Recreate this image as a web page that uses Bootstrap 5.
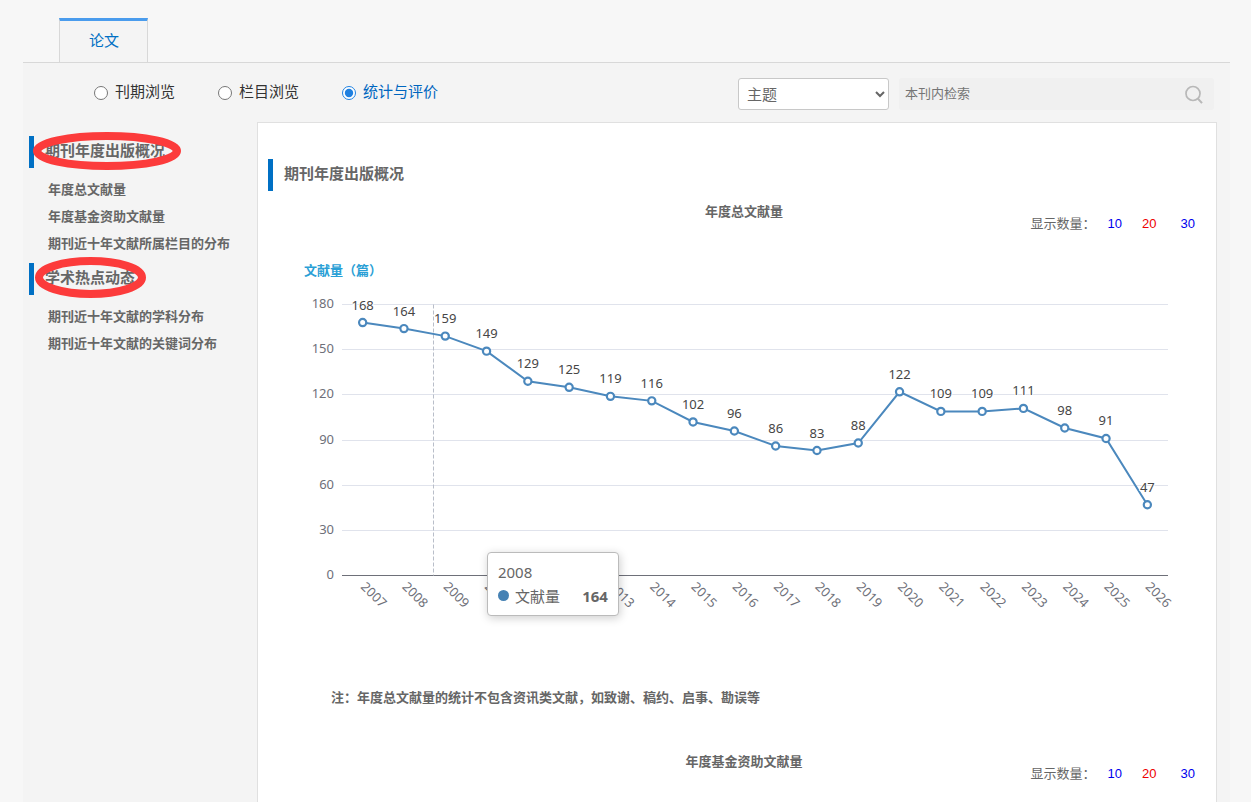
<!DOCTYPE html>
<html lang="zh-CN">
<head>
<meta charset="utf-8">
<meta name="viewport" content="width=device-width, initial-scale=1">
<title>期刊年度出版概况</title>
<link href="https://cdn.jsdelivr.net/npm/bootstrap@5.3.0/dist/css/bootstrap.min.css" rel="stylesheet">
<style>
  body { background: #f7f7f7; color: #666; font: 13px/20px "Liberation Sans", "Noto Sans CJK SC", sans-serif; }
  a { text-decoration: none; }
  .page-wrap { margin: 0 21px 0 23px; padding-top: 18px; }
  .tab-bar { padding-left: 36px; border-bottom: 1px solid #d8d8d8; }
  .tab-item { padding: 0 28px 1px 29px; border: 1px solid #d8d8d8; border-top: 3px solid #4a9ced; border-bottom: 0; background: #f4f4f4; color: #0070c4; font-size: 15px; line-height: 40px; }
  .page-body { background: #f4f4f4; }
  .tool-bar { padding: 15px 16px 12px 71px; color: #333; font-size: 15px; }
  .mode-list { gap: 43px; padding-bottom: 4px; }
  .mode-list label { gap: 7px; }
  .mode-list input { width: 14px; height: 14px; margin: 2px 0 0; accent-color: #1f80e0; }
  .mode-on { color: #0066bf; }
  .field-pick { width: 151px; height: 32px; margin-right: 10px; padding: 0 4px; border: 1px solid #c8c8c8; border-radius: 3px; background: #fff; color: #666; font-size: 15px; }
  .search-box { width: 315px; height: 32px; border-radius: 3px; background: #f0f0f0; padding: 0 10px 0 6px; }
  .search-box input { border: 0; background: none; outline: 0; font-size: 13px; min-width: 0; }
  .search-box input::placeholder { color: #757575; opacity: 1; }
  .search-box button { border: 0; background: none; padding: 0; line-height: 0; }
  .side-menu { width: 234px; padding: 14px 0 0 6px; }
  .side-menu ul { margin: 8px 0 6px; padding-left: 19px; line-height: 27px; font-weight: 700; }
  .side-menu li a { color: #666; }
  .bar-title { margin: 0; border-left: 5px solid #0070c4; padding-left: 11px; font-size: 15px; font-weight: 700; line-height: 30px; height: 32px; }
  .ring { left: 3px; top: -6px; overflow: visible; }
  .main-panel { margin-right: 13px; border: 1px solid #e0e0e0; border-bottom: 0; background: #fff; padding-top: 36px; min-width: 0; }
  .main-panel > .bar-title { margin-left: 10px; }
  .stat-head { display: grid; grid-template-columns: 1fr auto 1fr; align-items: start; padding: 11px 21px 0 35px; }
  .stat-head h3 { grid-column: 2; margin: 0; font-size: 13px; font-weight: 700; line-height: 20px; }
  .count-pick { padding-top: 12px; }
  .count-pick span { margin-right: 12px; }
  .count-pick nav { gap: 20px; }
  .count-pick a { color: #00e; }
  .count-pick a.active { color: #e00; }
  .chart-box { margin-top: 16px; }
  .chart-box text { font: 13px "Noto Sans", "Noto Sans CJK SC", sans-serif; fill: #6e7079; }
  .chart-box .unit { font: 700 13px "Noto Sans CJK SC", sans-serif; fill: #2a9fd6; }
  .chart-box .value { fill: #464646; stroke: #fff; stroke-width: 2px; paint-order: stroke; text-anchor: middle; }
  .tip { left: 23.9%; top: 77.4%; width: 132px; padding: 9px 10px; border: 1px solid #bbb; border-radius: 4px; background: #fff; box-shadow: 1px 2px 10px rgba(0,0,0,.2); color: #666; font: 15px/20px "Noto Sans", "Noto Sans CJK SC", sans-serif; }
  .dot { width: 11px; height: 11px; border-radius: 50%; background: #4682b4; margin-right: 6px; }
  .stat-note { margin: 48px 0 33px 73px; font-weight: 700; }
</style>
</head>
<body>
<div class="page-wrap d-flex flex-column min-vh-100">
  <nav class="tab-bar d-flex"><a class="tab-item" href="#">论文</a></nav>
  <div class="page-body flex-grow-1 d-flex flex-column">
    <form class="tool-bar d-flex align-items-center">
      <div class="mode-list d-flex me-auto">
        <label class="d-flex align-items-center"><input type="radio" name="mode">刊期浏览</label>
        <label class="d-flex align-items-center"><input type="radio" name="mode">栏目浏览</label>
        <label class="d-flex align-items-center mode-on"><input type="radio" name="mode" checked>统计与评价</label>
      </div>
      <select class="field-pick" aria-label="检索字段"><option>主题</option><option>篇名</option><option>作者</option></select>
      <div class="search-box d-flex align-items-center">
        <input class="flex-grow-1 p-0" type="text" placeholder="本刊内检索" aria-label="本刊内检索">
        <button type="button" aria-label="检索"><svg width="20" height="20" viewBox="0 0 20 20" fill="none" stroke="#b8b8b8" stroke-width="1.7"><circle cx="9" cy="9.5" r="7"/><path d="M13.8 14.5l4.2 4.6" stroke-width="2"/></svg></button>
      </div>
    </form>
    <div class="d-flex flex-grow-1">
      <aside class="side-menu flex-shrink-0">
        <div class="position-relative">
          <h2 class="bar-title">期刊年度出版概况</h2>
          <svg class="ring position-absolute" width="150" height="42" fill="none" stroke="#fc3b3b" stroke-width="8"><ellipse cx="75" cy="21" rx="70" ry="15"/></svg>
        </div>
        <ul class="list-unstyled">
          <li><a href="#">年度总文献量</a></li>
          <li><a href="#">年度基金资助文献量</a></li>
          <li><a href="#">期刊近十年文献所属栏目的分布</a></li>
        </ul>
        <div class="position-relative">
          <h2 class="bar-title">学术热点动态</h2>
          <svg class="ring position-absolute" width="116" height="42" fill="none" stroke="#fc3b3b" stroke-width="8"><ellipse cx="58.5" cy="20.5" rx="51.5" ry="16.5"/></svg>
        </div>
        <ul class="list-unstyled">
          <li><a href="#">期刊近十年文献的学科分布</a></li>
          <li><a href="#">期刊近十年文献的关键词分布</a></li>
        </ul>
      </aside>
      <main class="main-panel flex-grow-1">
        <h2 class="bar-title">期刊年度出版概况</h2>
        <section>
          <div class="stat-head">
            <h3>年度总文献量</h3>
            <div class="count-pick d-flex justify-content-end"><span>显示数量：</span><nav class="d-flex"><a href="#">10</a><a class="active" href="#">20</a><a href="#" class="ms-1">30</a></nav></div>
          </div>
          <div class="chart-box position-relative">
            <svg id="chart" class="d-block w-100" viewBox="0 0 958 390" role="img" aria-label="年度总文献量"></svg>
            <div class="tip position-absolute">
              <div>2008</div>
              <div class="d-flex align-items-center mt-1"><span class="dot"></span>文献量<b class="ms-auto">164</b></div>
            </div>
          </div>
          <p class="stat-note">注：年度总文献量的统计不包含资讯类文献，如致谢、稿约、启事、勘误等</p>
        </section>
        <section>
          <div class="stat-head">
            <h3>年度基金资助文献量</h3>
            <div class="count-pick d-flex justify-content-end"><span>显示数量：</span><nav class="d-flex"><a href="#">10</a><a class="active" href="#">20</a><a href="#" class="ms-1">30</a></nav></div>
          </div>
        </section>
      </main>
    </div>
  </div>
</div>
<script src="https://cdn.jsdelivr.net/npm/bootstrap@5.3.0/dist/js/bootstrap.bundle.min.js"></script>
<script>
  // Line chart: one value per year, starting in 2007
  const values = [168,164,159,149,129,125,119,116,102,96,86,83,88,122,109,109,111,98,91,47];
  const left = 84, right = 910, top0 = 54.5, base = 325.5, max = 180;
  const px = i => left + (i + .5) * (right - left) / values.length;
  const py = v => base - v * (base - top0) / max;
  let s = '<text class="unit" x="46" y="25">文献量（篇）</text>';
  for (let v = 0; v <= max; v += 30) {
    const y = Math.floor(py(v)) + .5;
    s += `<line x1="${left}" x2="${right}" y1="${y}" y2="${y}" stroke="${v ? '#e0e3ec' : '#6e7079'}"/>`;
    s += `<text x="76" y="${y + 3}" text-anchor="end">${v}</text>`;
  }
  s += `<line x1="175.5" x2="175.5" y1="${top0}" y2="${base}" stroke="#b9bec9" stroke-dasharray="4 2"/>`;
  s += `<polyline fill="none" stroke="#4b88bd" stroke-width="2" points="${values.map((v, i) => px(i) + ',' + py(v)).join(' ')}"/>`;
  values.forEach((v, i) => {
    s += `<circle cx="${px(i)}" cy="${py(v)}" r="3.6" fill="#fff" stroke="#4b88bd" stroke-width="2.2"/>`;
    s += `<text class="value" x="${px(i)}" y="${py(v) - 13}">${v}</text>`;
    s += `<text transform="translate(${px(i) + 1} 334) rotate(45)" y="5">${2007 + i}</text>`;
  });
  document.getElementById('chart').innerHTML = s;
</script>
</body>
</html>
